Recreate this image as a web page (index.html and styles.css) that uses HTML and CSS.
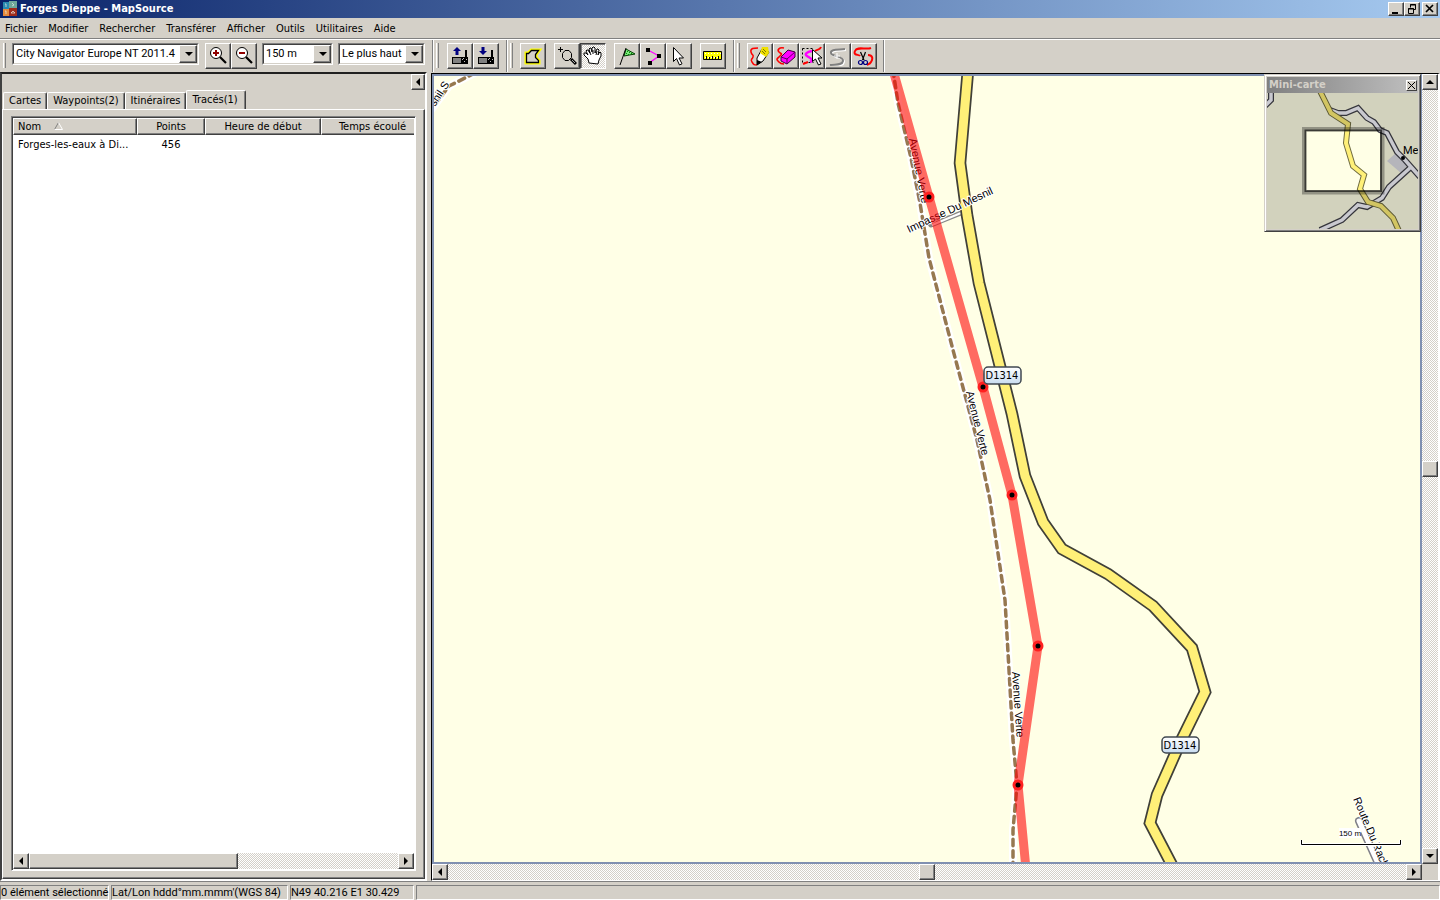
FILE: index.html
```html
<!DOCTYPE html>
<html lang="fr">
<head>
<meta charset="utf-8">
<title>Forges Dieppe - MapSource</title>
<link rel="stylesheet" href="styles.css">
</head>
<body>
<header class="titlebar">
  <svg class="app-icon" width="16" height="16" viewBox="0 0 16 16"><rect x="1" y="1" width="6" height="7" fill="#2a8cb0"/><rect x="7" y="0" width="8" height="7" fill="#6fa89a"/><rect x="1" y="8" width="6" height="7" fill="#e58a3c"/><rect x="7" y="7" width="8" height="8" fill="#a02c1c"/><path d="M3 3h1v3M10 2l2 2-2 1M3 10h1v3M9 12l2-2 2 2z" stroke="#e8f0e8" stroke-opacity=".7" fill="none"/></svg>
  <h1 class="title">Forges Dieppe - MapSource</h1>
  <div class="window-controls">
    <button class="win-btn" aria-label="Réduire"><svg width="14" height="12" viewBox="0 0 14 12"><path d="M3 9h6v2H3z"/></svg></button>
    <button class="win-btn" aria-label="Restaurer"><svg width="14" height="12" viewBox="0 0 14 12"><path d="M5.500 4.500v-3h5v5h-2M5 2h6M3.500 5.500h5v5h-5zM3 6h6" fill="none" stroke="#000"/></svg></button>
    <button class="win-btn win-close" aria-label="Fermer"><svg width="14" height="12" viewBox="0 0 14 12"><path d="M3 2l7 7M10 2l-7 7" fill="none" stroke="#000" stroke-width="1.700"/></svg></button>
  </div>
</header>
<nav class="menubar">
  <button>Fichier</button><button>Modifier</button><button>Rechercher</button><button>Transférer</button><button>Afficher</button><button>Outils</button><button>Utilitaires</button><button>Aide</button>
</nav>
<div class="toolbars" role="toolbar">
  <div class="band band-map">
    <span class="combo combo-product"><select aria-label="Produit"><option>City Navigator Europe NT 2011.4</option></select></span>
    <span class="tools">
      <button class="tool" aria-label="Zoom avant"><svg width="20" height="20" viewBox="0 0 20 20"><circle cx="8" cy="7" r="5.500" fill="#fff" stroke="#000"/><path d="M8 4v6M5 7h6" stroke="#900000" stroke-width="2"/><path d="M12 11l6 6" stroke="#000" stroke-width="2.200"/></svg></button>
      <button class="tool" aria-label="Zoom arrière"><svg width="20" height="20" viewBox="0 0 20 20"><circle cx="8" cy="7" r="5.500" fill="#fff" stroke="#000"/><path d="M5 7h6" stroke="#900000" stroke-width="2"/><path d="M12 11l6 6" stroke="#000" stroke-width="2.200"/></svg></button>
    </span>
    <span class="combo combo-scale"><select aria-label="Échelle"><option>150 m</option></select></span>
    <span class="combo combo-detail"><select aria-label="Détail"><option>Le plus haut</option></select></span>
  </div>
  <div class="band band-device">
    <span class="tools">
      <button class="tool" aria-label="Envoyer vers l'appareil"><svg width="20" height="20" viewBox="0 0 20 20"><path d="M7 1l4 4H8.500v4h-3V5H3z" fill="#000080"/><path d="M2 11h16v7H2z"/><path d="M15 4h2v8h-2z"/><path d="M3 12h8v5H3z" fill="#808080"/><path d="M12 13h1v1h-1zM14 15h1v1h-1zM16 13h1v1h-1zM13 12h1v1h-1z" fill="#c0c0c0"/></svg></button>
      <button class="tool" aria-label="Recevoir de l'appareil"><svg width="20" height="20" viewBox="0 0 20 20"><path d="M7 9l4-4H8.500V1h-3v4H3z" fill="#000080"/><path d="M2 11h16v7H2z"/><path d="M15 4h2v8h-2z"/><path d="M3 12h8v5H3z" fill="#808080"/><path d="M12 13h1v1h-1zM14 15h1v1h-1zM16 13h1v1h-1zM13 12h1v1h-1z" fill="#c0c0c0"/></svg></button>
    </span>
  </div>
  <div class="band band-tools">
    <span class="tools">
      <button class="tool" aria-label="Carte"><svg width="20" height="20" viewBox="0 0 20 20"><path d="M3.500 7.500h2l3-3h7l-3 4v3l3 3v2h-12z" fill="none" stroke="#ff0" stroke-width="4"/><path d="M3.500 7.500h2l3-3h7l-3 4v3l3 3v2h-12z" fill="#d4d0c8" stroke="#000" stroke-width="1.300"/></svg></button>
    </span>
    <span class="tools">
      <button class="tool" aria-label="Zoom"><svg width="20" height="20" viewBox="0 0 20 20"><path d="M1 3.500h5M3.500 1v5" stroke="#000"/><path d="M8 4.500h4l2.500 3v4l-3 3H8l-2.500-3v-4z" fill="none" stroke="#000"/><path d="M14 13l5 5" stroke="#000" stroke-width="3"/><path d="M15 14l3 3" stroke="#aaa"/></svg></button>
      <button class="tool pressed" aria-label="Main" aria-pressed="true"><svg width="20" height="20" viewBox="0 0 20 20"><path d="M6 17l-1-4-4-4V7h2l2 2-2-4 1-1h1l2 3-1-4 1-1h1l1 4V2l1-1h1l1 1v5l2-4h1l1 1-1 5 1-2 1-1 1 1v3l-2 4-1 4z" fill="#fff" stroke="#000"/><path d="M6 5l2 4M10 4v4M14 5l-1 4" stroke="#000"/></svg></button>
    </span>
    <span class="tools">
      <button class="tool" aria-label="Waypoint"><svg width="20" height="20" viewBox="0 0 20 20"><path d="M9 3l9 5-11 2z" fill="#7ee87e" stroke="#004000"/><path d="M10 5h1v1h-1zM12 6h1v1h-1zM14 7h1v1h-1zM9 7h1v1H9zM11 8h1v1h-1z" fill="#009000"/><path d="M9 2L3 19" stroke="#000"/></svg></button>
      <button class="tool" aria-label="Itinéraire"><svg width="20" height="20" viewBox="0 0 20 20"><path d="M5 4l11 6-10 7" fill="none" stroke="#f0f" stroke-width="1.300"/><path d="M3 2h4v4H3zM14 8h4v4h-4zM5 15h4v4H5z"/></svg></button>
      <button class="tool" aria-label="Sélection"><svg width="20" height="20" viewBox="0 0 20 20"><path d="M4.500 1.500v14l3-3 3 6.500 2.500-1.200-3-5.800h4.500z" fill="#fff" stroke="#000"/></svg></button>
    </span>
    <span class="tools">
      <button class="tool" aria-label="Mesure"><svg width="20" height="20" viewBox="0 0 20 20"><path d="M.5 5.500h18v8H.5z" fill="#ff0" stroke="#000"/><path d="M2 7h1v1H2zM5 7h1v1H5zM8 7h1v1H8zM11 7h1v1h-1zM14 7h1v1h-1zM17 7h1v1h-1zM2 11h1v1H2zM5 11h1v1H5zM8 11h1v1H8zM11 11h1v1h-1zM14 11h1v1h-1z" fill="#fff"/><path d="M3.500 10v3M6.500 11v2M9.500 10v3M12.500 11v2M15.500 10v3" stroke="#000"/></svg></button>
    </span>
  </div>
  <div class="band band-track">
    <span class="tools">
      <button class="tool" aria-label="Dessiner un tracé"><svg width="22" height="20" viewBox="0 0 22 20"><path d="M9 2C5 2 1 2 2 6s3 2 2 5-3 2-1 5 2 3 5 3" fill="none" stroke="#f00" stroke-width="1.500"/><path d="M13 3l-5 9v7l6-4 6-9z" fill="#fff" stroke="#000"/><path d="M13 1h6l1 6-3 4-6-4z" fill="#f0e000"/><path d="M14 3l3 3M13 5l3 3" stroke="#807800"/><path d="M8 14v5l5-3z"/></svg></button>
      <button class="tool" aria-label="Effacer un tracé"><svg width="22" height="20" viewBox="0 0 22 20"><path d="M9 2C4 1 2 4 4 6s4 1 1 4-4 3-2 5 2 3 6 3" fill="none" stroke="#f00" stroke-width="1.600"/><path d="M13 4l7 2v5l-8 7-6-3v-4z" fill="#f0f" stroke="#400040"/><path d="M6 11l6 2 8-7M12 13v5" fill="none" stroke="#600060"/></svg></button>
      <button class="tool" aria-label="Sélectionner un tracé"><svg width="22" height="20" viewBox="0 0 22 20"><path d="M1.500 2.500h11M1.500 2.500v14h11" fill="none" stroke="#000" stroke-dasharray="2 2"/><path d="M11 5C6 6 3 8 6 10s8 4 3 6" fill="none" stroke="#f0f" stroke-width="2.500"/><path d="M20 1c-1 3-3 2-6 4M2 18l5-2" fill="none" stroke="#f00" stroke-width="2"/><path d="M11.500 3.500v12l3-2.500 3 6 2.500-1-3-6h4z" fill="#fff" stroke="#000"/></svg></button>
      <button class="tool" aria-label="Joindre des tracés" disabled><svg width="22" height="20" viewBox="0 0 22 20"><path d="M18 3C12 4 3 3 4 7s13 3 12 8-8 3-13 4" fill="none" stroke="#fff" stroke-width="2" transform="translate(1 1)"/><path d="M18 3C12 4 3 3 4 7s13 3 12 8-8 3-13 4" fill="none" stroke="#808080" stroke-width="2"/><path d="M10 7v6M7 10h6" stroke="#fff"/></svg></button>
      <button class="tool" aria-label="Diviser un tracé"><svg width="22" height="20" viewBox="0 0 22 20"><path d="M18 2C13 4 4 0 2 5s4 3 5 5M15 9c5 0 5 4 3 7-1 2-2 2-4 3" fill="none" stroke="#f00" stroke-width="2"/><path d="M7.500 6l3.500 8M12.500 6l-3 8" stroke="#000" stroke-width="1.200"/><circle cx="7.500" cy="16.500" r="2" fill="none" stroke="#000080" stroke-width="1.200"/><circle cx="12.500" cy="16.500" r="2" fill="none" stroke="#000080" stroke-width="1.200"/></svg></button>
    </span>
  </div>
</div>
<main class="workspace">
  <section class="side">
    <div class="side-top"><button class="collapse" aria-label="Masquer le panneau"><span class="arrow left"></span></button></div>
    <div class="tabs" role="tablist">
      <button role="tab">Cartes</button><button role="tab">Waypoints(2)</button><button role="tab">Itinéraires</button><button role="tab" class="active" aria-selected="true">Tracés(1)</button>
    </div>
    <div class="tabpage">
      <div class="list">
        <div class="list-body">
          <table class="tracks">
            <colgroup><col class="c-name"><col class="c-points"><col class="c-start"><col class="c-time"></colgroup>
            <thead><tr><th class="left-cell">Nom <svg class="sort" width="9" height="8" viewBox="0 0 9 8"><path d="M.5 7.500L4.500.5" stroke="#808080"/><path d="M4.500.5l4 7H.5" fill="none" stroke="#fff"/></svg></th><th>Points</th><th>Heure de début</th><th>Temps écoulé</th></tr></thead>
            <tbody><tr><td class="left-cell">Forges-les-eaux à Di...</td><td>456</td><td></td><td></td></tr></tbody>
          </table>
        </div>
        <div class="hscroll">
          <button class="sb" aria-label="Défiler à gauche"><span class="arrow left"></span></button><span class="thumb list-thumb"></span><span class="track"></span><button class="sb" aria-label="Défiler à droite"><span class="arrow right"></span></button>
        </div>
      </div>
    </div>
  </section>
  <section class="map-pane">
    <div class="map">
      <svg class="map-svg" viewBox="432 74 990 790" preserveAspectRatio="xMidYMid slice">
        <rect x="0" y="0" width="2400" height="1800" fill="#ffffe6"/>
        <g fill="none" stroke-linejoin="round">
          <g stroke="#fff" stroke-width="8">
            <path d="M893 70L898 103L911 158L920 203L929 258L953 350L977 440L990 500L1005 600L1013 740L1017 785L1013 830L1013 868"/>
            <path d="M428 114L449 86L475 73"/>
          </g>
          <g stroke="#967850" stroke-width="3.500" stroke-dasharray="6.500 5" stroke-linecap="round">
            <path d="M893 70L898 103L911 158L920 203L929 258L953 350L977 440L990 500L1005 600L1013 740L1017 785L1013 830L1013 868"/>
            <path d="M428 114L449 86L475 73"/>
          </g>
          <path d="M961 213L931 225L929 222" stroke="#888" stroke-width="5"/>
          <path d="M961 213L932 225" stroke="#fff" stroke-width="2"/>
          <path d="M1359 821L1381 870" stroke="#808088" stroke-width="8" stroke-linecap="round"/>
          <path d="M1359 821L1381 870" stroke="#fff" stroke-width="5" stroke-linecap="round"/>
          <path d="M968 70L960 163L967 215L979 283L1012 414L1025 476L1043 522L1062 549L1108 574L1153 606L1192 648L1205 692L1180 743L1157 795L1150 823L1174 869" stroke="#404038" stroke-width="12.500" stroke-linejoin="miter"/>
          <path d="M968 70L960 163L967 215L979 283L1012 414L1025 476L1043 522L1062 549L1108 574L1153 606L1192 648L1205 692L1180 743L1157 795L1150 823L1174 869" stroke="#fff078" stroke-width="9" stroke-linejoin="miter"/>
        </g>
        <g class="label">
          <text transform="translate(909 139) rotate(79)">Avenue Verte</text>
          <text transform="translate(966 392) rotate(76)">Avenue Verte</text>
          <text transform="translate(1012 672) rotate(86)">Avenue Verte</text>
          <text transform="translate(909 233) rotate(-25)">Impasse Du Mesnil</text>
          <text transform="translate(435 107) rotate(-57)">snil S</text>
          <text transform="translate(1353 799) rotate(67)">Route Du Rack</text>
        </g>
        <path d="M893 70L929 197L983 387L1012 495L1038 646L1018 785L1026 869" fill="none" stroke="#f00" stroke-opacity=".58" stroke-width="9" stroke-linejoin="round"/>
        <g fill="#000" stroke="#ff2020" stroke-width="3">
          <circle cx="929" cy="197" r="4"/><circle cx="983" cy="387" r="4"/><circle cx="1012" cy="495" r="4"/><circle cx="1038" cy="646" r="4"/><circle cx="1018" cy="785" r="4"/>
        </g>
        <linearGradient id="shield" x2="0" y2="1"><stop stop-color="#fff"/><stop offset="1" stop-color="#c8dcf0"/></linearGradient>
        <g fill="url(#shield)" stroke="#404850" stroke-width="1.500"><rect x="984" y="367" width="37" height="17" rx="4"/><rect x="1162" y="737" width="37" height="16" rx="4"/></g>
        <g class="shield-text"><text x="1002" y="379">D1314</text><text x="1180" y="749">D1314</text></g>
        <rect x="1339" y="828" width="22" height="10" fill="#fff"/>
        <text class="scale-text" x="1350" y="836">150 m</text>
        <path d="M1301.500 840v4.500h99V840" fill="none" stroke="#fff" stroke-width="3"/>
        <path d="M1301.500 840v4.500h99V840" fill="none" stroke="#000"/>
      </svg>
      <aside class="mini">
        <div class="mini-title"><span>Mini-carte</span><button class="mini-close" aria-label="Fermer la mini-carte"><svg width="9" height="9" viewBox="0 0 9 9"><path d="M1 1l7 7M8 1L1 8" stroke="#000"/></svg></button></div>
        <svg class="mini-map" viewBox="1267 93 151 136">
          <rect x="1267" y="93" width="151" height="136" fill="#ffffe6"/>
          <path d="M1387 161l9-8 14 9-9 11z" fill="#dcdce4"/>
          <g fill="none" stroke="#404048" stroke-width="6"><path d="M1330 110L1338 113H1346L1358 108L1367 118L1374 122L1380 130L1387 133L1397 152L1405 160L1420 177"/><path d="M1411 167L1389 187L1382 198L1367 207L1358 205L1342 220L1320 230M1271 92V100L1265 106"/></g>
          <g fill="none" stroke="#f4f4fc" stroke-width="3.500"><path d="M1330 110L1338 113H1346L1358 108L1367 118L1374 122L1380 130L1387 133L1397 152L1405 160L1420 177"/><path d="M1411 167L1389 187L1382 198L1367 207L1358 205L1342 220L1320 230M1271 92V100L1265 106"/></g>
          <path d="M1320 91L1331 113L1348 124L1346 143L1353 166L1364 175L1360 189L1368 202L1381 206L1393 218L1399 231" fill="none" stroke="#706c40" stroke-width="6"/>
          <path d="M1320 91L1331 113L1348 124L1346 143L1353 166L1364 175L1360 189L1368 202L1381 206L1393 218L1399 231" fill="none" stroke="#fff078" stroke-width="4"/>
          <path d="M1267 93h151v136h-151zM1306 131v60h74v-60z" fill="#000" fill-opacity=".175" fill-rule="evenodd"/>
          <g fill="none" stroke="#000"><rect x="1304" y="129" width="78.500" height="63.500" stroke-width="4" stroke-opacity=".3"/><rect x="1305.500" y="130.500" width="75.500" height="60.500" stroke-width="2" stroke-opacity=".6"/></g>
          <circle cx="1403" cy="158" r="2"/>
          <text class="mini-label" x="1403" y="154">Mes</text>
        </svg>
      </aside>
    </div>
    <div class="vscroll">
      <button class="sb" aria-label="Défiler vers le haut"><span class="arrow up"></span></button><span class="track"></span><span class="thumb"></span><span class="track"></span><button class="sb" aria-label="Défiler vers le bas"><span class="arrow down"></span></button>
    </div>
    <div class="hscroll">
      <button class="sb" aria-label="Défiler à gauche"><span class="arrow left"></span></button><span class="track"></span><span class="thumb"></span><span class="track"></span><button class="sb" aria-label="Défiler à droite"><span class="arrow right"></span></button>
    </div>
    <div class="corner"></div>
  </section>
</main>
<footer class="status">
  <span class="st-count">0 élément sélectionné</span><span class="st-format">Lat/Lon hddd°mm.mmm'(WGS 84)</span><span class="st-pos">N49 40.216 E1 30.429</span><span class="st-rest"></span>
</footer>
</body>
</html>
```
FILE: styles.css
```css
* { box-sizing: border-box; }

body {
  margin: 0;
  height: 100vh;
  display: flex;
  flex-direction: column;
  overflow: hidden;
  background: #d4d0c8;
  color: #000;
  font: 11px/14px "DejaVu Sans Condensed", "Noto Sans", sans-serif;
}

button, select { font: inherit; color: inherit; }

button {
  padding: 0;
  border: 0;
  background: #d4d0c8;
  display: flex;
  align-items: center;
  justify-content: center;
}

svg { display: block; flex: none; }

/* Title bar */
.titlebar {
  height: 18px;
  flex: none;
  display: flex;
  align-items: center;
  padding: 0 2px;
  background: linear-gradient(90deg, #0a246a, #a6caf0);
}
.title { margin: 0 auto 0 2px; font: bold 11px/18px "DejaVu Sans Condensed", sans-serif; color: #fff; }
.window-controls { display: flex; }
.win-btn, .tool, .sb, .thumb, .collapse, .mini-close {
  border: 1px solid;
  border-color: #fff #404040 #404040 #fff;
  box-shadow: inset -1px -1px #808080;
  background: #d4d0c8;
}
.win-btn { width: 16px; height: 14px; }
.win-close { margin-left: 2px; }

/* Menu */
.menubar {
  height: 21px;
  flex: none;
  display: flex;
  align-items: center;
  border-bottom: 1px solid #808080;
}
.menubar button { padding: 1px 6px 0 5px; height: 20px; }

/* Toolbars */
.toolbars { flex: none; display: flex; height: 33px; border-top: 1px solid #fff; }
.band {
  display: flex;
  align-items: flex-start;
  padding: 3px 6px 0 13px;
  border-right: 1px solid #808080;
  box-shadow: 1px 0 #fff;
  background: linear-gradient(#fff, #fff) 3px 3px / 1px 25px no-repeat, linear-gradient(#808080, #808080) 5px 3px / 1px 25px no-repeat;
}
.band-map { width: 433px; padding-left: 12px; }
.band-device { width: 74px; padding-left: 14px; }
.band-tools { width: 227px; gap: 8px; }
.band-track { width: 150px; }
.tools { display: flex; }
.tool { width: 26px; height: 26px; }
.pressed {
  border-color: #404040 #fff #fff #404040;
  box-shadow: inset 1px 1px #808080;
  background: conic-gradient(#fff 25%, #d4d0c8 0 50%, #fff 0 75%, #d4d0c8 0) 0 0 / 2px 2px;
}
.combo {
  position: relative;
  height: 22px;
  border: 1px solid;
  border-color: #808080 #fff #fff #808080;
}
.combo select {
  appearance: none;
  width: 100%;
  height: 20px;
  padding: 0 16px 0 2px;
  margin: 0;
  display: block;
  border: 1px solid;
  border-color: #404040 #d4d0c8 #d4d0c8 #404040;
  border-radius: 0;
  background: #fff;
  font: 11px/18px Roboto, sans-serif;
}
.combo::before {
  content: "";
  position: absolute;
  top: 1px; right: 1px; bottom: 1px;
  width: 16px;
  border: 1px solid;
  border-color: #fff #404040 #404040 #fff;
  box-shadow: inset -1px -1px #808080;
  background: #d4d0c8;
  pointer-events: none;
}
.combo::after {
  content: "";
  position: absolute;
  top: 8px; right: 5px;
  border: 4px solid transparent;
  border-top-color: #000;
  border-bottom: 0;
  pointer-events: none;
}
.combo-product { width: 187px; margin-right: 6px; }
.combo-scale { width: 71px; margin: 0 5px; }
.combo-detail { width: 87px; }

/* Workspace */
.workspace { flex: 1; min-height: 0; display: flex; gap: 4px; }
.side {
  width: 427px;
  flex: none;
  display: flex;
  flex-direction: column;
  border: 2px solid;
  border-color: #202020 #fff #fff #404040;
}
.side-top { display: flex; justify-content: flex-end; height: 16px; }
.collapse { width: 14px; height: 16px; }
.tabs { display: flex; align-items: flex-end; height: 19px; padding-left: 1px; }
.tabs button {
  height: 17px;
  padding: 0 5px;
  border: 1px solid;
  border-color: #fff #404040 transparent #fff;
  border-bottom: 0;
  border-radius: 2px 2px 0 0;
  box-shadow: inset -1px 0 #808080;
}
.tabs button.active { height: 20px; margin-bottom: -1px; padding-bottom: 2px; padding-right: 7px; }
.tabpage {
  flex: 1;
  min-height: 0;
  display: flex;
  padding: 6px 8px 7px 8px;
  border: 1px solid;
  border-color: #fff #404040 #404040 #fff;
  box-shadow: inset -1px -1px #808080;
}
.list {
  flex: 1;
  min-width: 0;
  display: flex;
  flex-direction: column;
  border: 1px solid;
  border-color: #808080 #fff #fff #808080;
  background: #fff;
  box-shadow: inset 1px 1px #404040;
  padding: 1px;
}
.list-body { flex: 1; overflow: hidden; }
.tracks { width: 411px; table-layout: fixed; border-collapse: separate; border-spacing: 0; }
.c-name { width: 124px; }
.c-points { width: 68px; }
.c-start { width: 116px; }
.c-time { width: 103px; }
.tracks th {
  height: 17px;
  padding: 1px 0 0;
  font-weight: normal;
  background: #d4d0c8;
  border: 1px solid;
  border-color: #fff #404040 #404040 #fff;
  box-shadow: inset -1px -1px #808080;
}
.tracks td { padding: 3px 0 0; text-align: center; white-space: nowrap; }
.tracks .left-cell { text-align: left; padding-left: 5px; }
.tracks th.left-cell { padding-left: 4px; }
.sort { display: inline-block; margin-left: 10px; }

/* Scroll bars */
.hscroll, .vscroll { display: flex; }
.hscroll { height: 16px; }
.vscroll { flex-direction: column; width: 16px; }
.sb, .thumb { width: 16px; height: 16px; flex: none; }
.list-thumb { width: 209px; }
.track {
  flex: 1;
  background: conic-gradient(#fff 25%, #d4d0c8 0 50%, #fff 0 75%, #d4d0c8 0) 0 0 / 2px 2px;
}
.arrow { width: 0; height: 0; border: 4px solid transparent; }
.arrow.left { border-right-color: #000; border-left: 0; }
.arrow.right { border-left-color: #000; border-right: 0; }
.arrow.up { border-bottom-color: #000; border-top: 0; }
.arrow.down { border-top-color: #000; border-bottom: 0; }

/* Map */
.map-pane {
  flex: 1;
  min-width: 0;
  display: grid;
  grid-template: minmax(0, 1fr) 16px / minmax(0, 1fr) 16px;
  border: 1px solid;
  border-color: #000 #fff #fff #000;
  border-right-width: 2px;
  margin-top: 1px;
}
.map { position: relative; overflow: hidden; }
.map::after {
  content: "";
  position: absolute;
  inset: 0;
  border: 2px solid #8090b0;
  pointer-events: none;
}
.map-svg { width: 100%; height: 100%; }
.label text {
  font: 11px "Liberation Sans", sans-serif;
  paint-order: stroke;
  stroke: #fff;
  stroke-width: 2px;
}
.shield-text text { font: 11px "DejaVu Sans Condensed", sans-serif; text-anchor: middle; }
.scale-text { font: 8px "Liberation Sans", sans-serif; text-anchor: middle; }
.mini {
  position: absolute;
  z-index: 1;
  top: 0;
  right: 1px;
  width: 157px;
  padding: 1px;
  border: 1px solid;
  border-color: #d4d0c8 #404040 #404040 #d4d0c8;
  box-shadow: inset 1px 1px #fff, inset -1px -1px #808080;
  background: #d4d0c8;
}
.mini-title {
  display: flex;
  align-items: center;
  justify-content: space-between;
  height: 16px;
  margin: 1px 1px 0;
  padding: 0 1px 0 2px;
  background: linear-gradient(90deg, #808080, #c0c0c0);
  color: #d4d0c8;
  font-weight: bold;
}
.mini-close { width: 11px; height: 11px; box-shadow: none; }
.mini-map { width: 151px; height: 136px; margin: 0 1px 1px; }
.mini-label { font: 11px Roboto, sans-serif; }

/* Status bar */
.status {
  flex: none;
  display: flex;
  gap: 2px;
  height: 19px;
  padding: 3px 0 0;
  border-top: 1px solid #808080;
  font-family: Roboto, sans-serif;
}
.status span {
  border: 1px solid;
  border-color: #808080 #fff #fff #808080;
  white-space: nowrap;
}
.st-count { width: 109px; }
.st-format { width: 177px; }
.st-pos { width: 124px; }
.st-rest { flex: 1; }
```
